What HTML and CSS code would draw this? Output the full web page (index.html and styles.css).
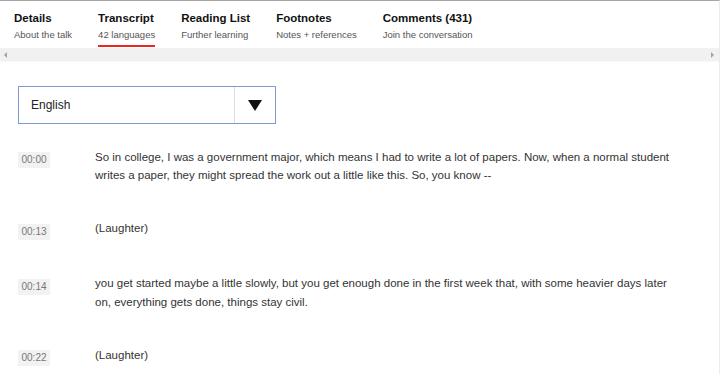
FILE: index.html
```html
<!DOCTYPE html>
<html>
<head>
  <meta charset="utf-8">
  <title>Transcript</title>
  <link rel="stylesheet" href="styles.css">
</head>
<body>

<div class="frame">

  <!-- tabs -->
  <div class="tabs">
    <div class="tab">
      <div class="tab-title">Details</div>
      <div class="tab-sub">About the talk</div>
    </div>
    <div class="tab active">
      <div class="tab-title">Transcript</div>
      <div class="tab-sub">42 languages</div>
    </div>
    <div class="tab">
      <div class="tab-title">Reading List</div>
      <div class="tab-sub">Further learning</div>
    </div>
    <div class="tab">
      <div class="tab-title">Footnotes</div>
      <div class="tab-sub">Notes + references</div>
    </div>
    <div class="tab">
      <div class="tab-title">Comments (431)</div>
      <div class="tab-sub">Join the conversation</div>
    </div>
  </div>

  <!-- fake scrollbar under the tabs -->
  <div class="hscroll">
    <span class="arr arr-left"></span>
    <span class="arr arr-right"></span>
  </div>

  <!-- language -->
  <div class="lang">
    <div class="lang-name">English</div>
    <div class="lang-arrow"><span class="tri"></span></div>
  </div>

  <!-- transcript -->
  <div class="para">
    <div class="time">00:00</div>
    <p>So in college, I was a government major, which means I had to write a lot of papers. Now, when a normal student writes a paper, they might spread the work out a little like this. So, you know --</p>
  </div>
  <div class="para">
    <div class="time">00:13</div>
    <p>(Laughter)</p>
  </div>
  <div class="para">
    <div class="time">00:14</div>
    <p>you get started maybe a little slowly, but you get enough done in the first week that, with some heavier days later on, everything gets done, things stay civil.</p>
  </div>
  <div class="para">
    <div class="time">00:22</div>
    <p>(Laughter)</p>
  </div>

</div>

</body>
</html>
```

FILE: styles.css
```css
body {
  margin: 0;
  font-family: "Liberation Sans", Arial, sans-serif;
  color: #333;
  background: #fff;
}
.frame {
  height: 373px;
  border-top: 1px solid #a6a6a6;
  border-right: 1px solid #ececec;
  overflow: hidden;
}
.tabs {
  display: flex;
  gap: 26px;
  padding: 10px 0 0 14px;
}
.tab {
  flex: none;
  padding-bottom: 4px;
  border-bottom: 2px solid transparent;
}
.tab.active {
  border-bottom-color: #e62b1e;
}
.tab-title {
  font-size: 11.5px;
  font-weight: bold;
  color: #111;
  line-height: 15px;
}
.tab-sub {
  font-size: 9.5px;
  color: #555;
  line-height: 12px;
  margin-top: 3px;
}
.hscroll {
  display: flex;
  justify-content: space-between;
  align-items: center;
  height: 13px;
  margin-top: 1px;
  padding: 0 5px 0 4px;
  background: #f1f1f1;
  border-bottom: 1px solid #f8f8f8;
}
.arr {
  width: 0;
  height: 0;
  border-top: 3px solid transparent;
  border-bottom: 3px solid transparent;
}
.arr-left {
  border-right: 3px solid #a3a3a3;
}
.arr-right {
  border-left: 3px solid #a3a3a3;
}
.lang {
  display: flex;
  width: 256px;
  height: 36px;
  margin: 24px 0 0 18px;
  border: 1px solid #7d9ad0;
}
.lang-name {
  flex: 1;
  font-size: 12px;
  color: #222;
  padding-left: 12px;
  line-height: 36px;
  border-right: 1px solid #ddd;
}
.lang-arrow {
  width: 40px;
  display: flex;
  align-items: center;
  justify-content: center;
}
.tri {
  width: 0;
  height: 0;
  border-left: 7px solid transparent;
  border-right: 7px solid transparent;
  border-top: 11px solid #111;
}
.para {
  display: flex;
  margin: 23.5px 0 0 18px;
}
.para + .para {
  margin-top: 34.5px;
}
.time {
  flex: none;
  width: 32px;
  height: 16px;
  margin-top: 4.5px;
  background: #f2f2f2;
  color: #777;
  font-size: 10px;
  line-height: 16px;
  text-align: center;
}
.para p {
  margin: 0 0 0 45px;
  width: 580px;
  font-size: 11.5px;
  line-height: 18.5px;
}
```
